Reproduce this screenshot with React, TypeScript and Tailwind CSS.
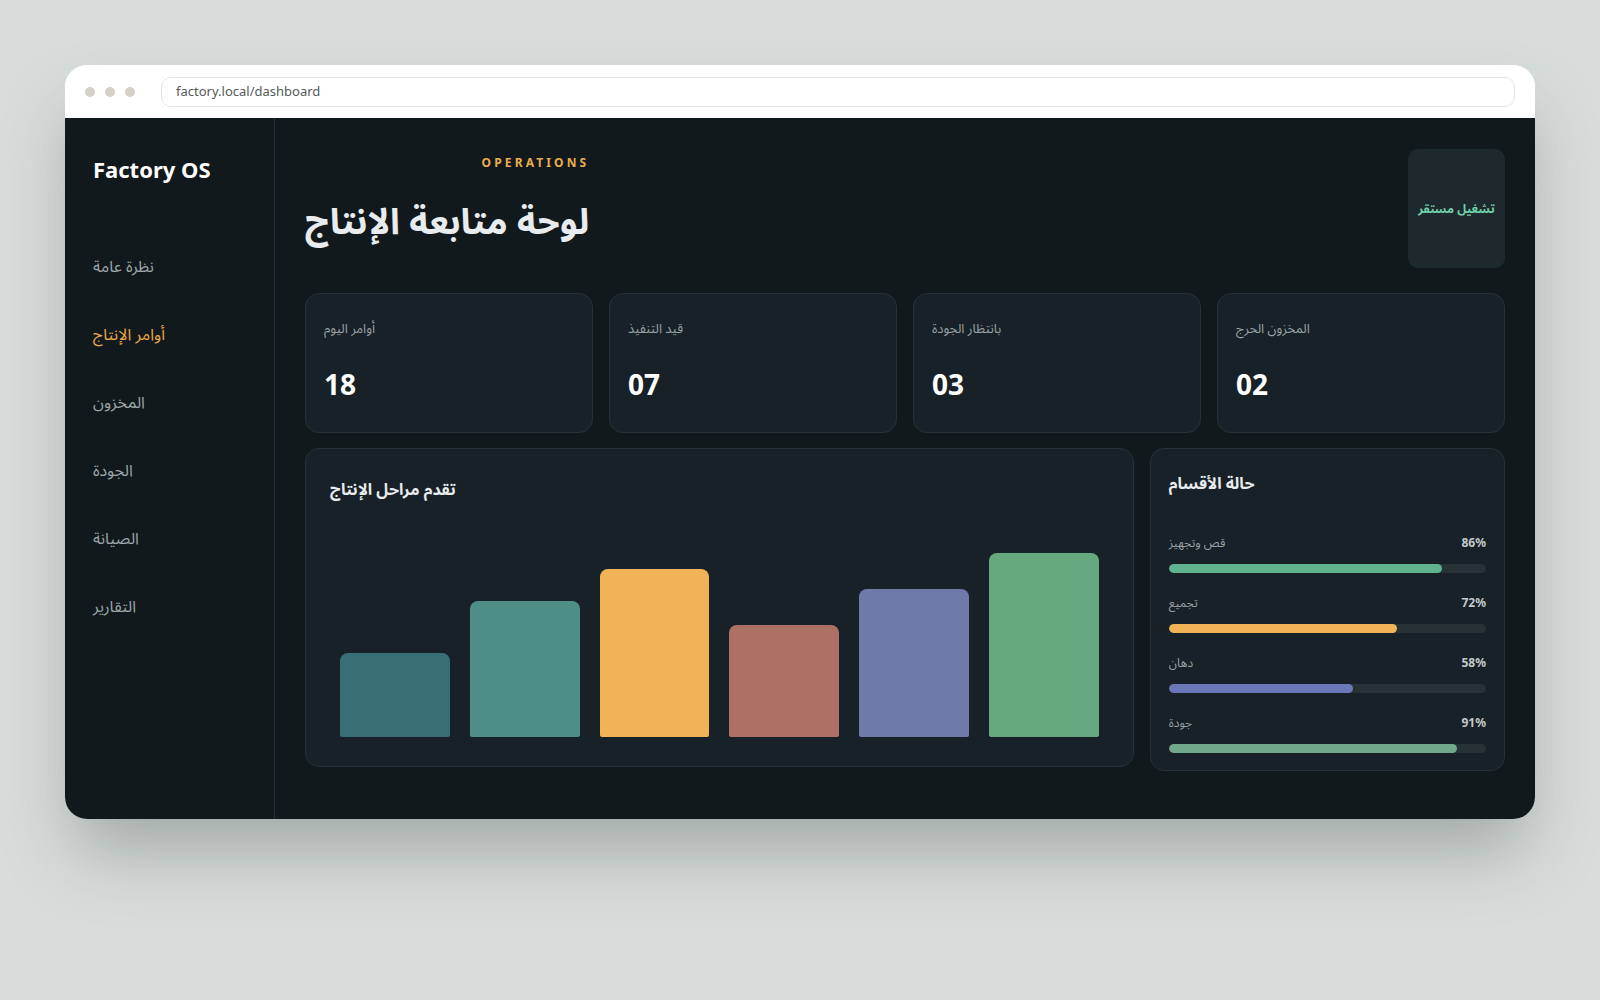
import React from "react";

const nav = [
  { label: "نظرة عامة", active: false },
  { label: "أوامر الإنتاج", active: true },
  { label: "المخزون", active: false },
  { label: "الجودة", active: false },
  { label: "الصيانة", active: false },
  { label: "التقارير", active: false },
];

const stats = [
  { label: "أوامر اليوم", value: "18" },
  { label: "قيد التنفيذ", value: "07" },
  { label: "بانتظار الجودة", value: "03" },
  { label: "المخزون الحرج", value: "02" },
];

const bars = [
  { h: 84, color: "#386f77" },
  { h: 136, color: "#4f8e86" },
  { h: 168, color: "#f0b457" },
  { h: 112, color: "#ad7065" },
  { h: 148, color: "#6f7aab" },
  { h: 184, color: "#66a880" },
];

const depts = [
  { label: "قص وتجهيز", pct: 86, color: "#5fb48e" },
  { label: "تجميع", pct: 72, color: "#f0b457" },
  { label: "دهان", pct: 58, color: "#6a78b8" },
  { label: "جودة", pct: 91, color: "#72a88a" },
];

export default function App() {
  return (
    <div
      className="min-h-screen w-full bg-[#d7dddb] px-[65px] pt-[65px] pb-[100px]"
      style={{ fontFamily: '"Noto Sans", "Noto Sans Arabic", "Noto Naskh Arabic", sans-serif' }}
    >
      <div className="rounded-[22px] overflow-hidden bg-white shadow-[0_40px_70px_-10px_rgba(60,70,65,0.35)]">
        {/* Browser chrome */}
        <div className="h-[53px] flex items-center px-[20px] bg-white">
          <div className="flex items-center gap-[10px]">
            <span className="w-[10px] h-[10px] rounded-full bg-[#d6d1c5]" />
            <span className="w-[10px] h-[10px] rounded-full bg-[#d6d1c5]" />
            <span className="w-[10px] h-[10px] rounded-full bg-[#d6d1c5]" />
          </div>
          <div className="ml-[26px] flex-1 h-[30px] rounded-[10px] border border-[#e4e4e2] flex items-center pl-[14px] text-[13px] text-[#555a5c]">
            factory.local/dashboard
          </div>
        </div>

        {/* App body */}
        <div className="h-[701px] flex bg-[#12191c]">
          <aside className="w-[210px] shrink-0 border-r border-[#263034] pt-[36px] px-[28px]">
            <div className="text-[22px] leading-[30px] font-bold text-white">Factory OS</div>
            <nav className="mt-[48px] flex flex-col">
              {nav.map((n) => (
                <div
                  key={n.label}
                  className={`h-[68px] flex items-center text-[16px] ${n.active ? "text-[#eaa94a]" : "text-[#9ca5a8]"}`}
                >
                  {n.label}
                </div>
              ))}
            </nav>
          </aside>

          <main className="flex-1 px-[30px] pt-[31px]">
            {/* Header */}
            <div className="flex justify-between items-stretch">
              <div className="flex flex-col items-end pt-[6px]">
                <span className="text-[12px] leading-[16px] font-bold tracking-[0.26em] text-[#e9ad4f]">OPERATIONS</span>
                <h1 className="mt-[24px] text-[36px] leading-[52px] font-bold text-[#e8ecee]">لوحة متابعة الإنتاج</h1>
              </div>
              <div className="w-[97px] h-[119px] rounded-[10px] bg-[#1d292c] flex items-center justify-center text-[12px] font-bold text-[#6fd0a8] whitespace-nowrap">
                تشغيل مستقر
              </div>
            </div>

            {/* Stats */}
            <div className="mt-[25px] grid grid-cols-4 gap-4">
              {stats.map((s) => (
                <div key={s.label} className="h-[140px] rounded-[14px] border border-[#263236] bg-[#182127] px-[18px] pt-[24px]">
                  <div className="text-[13px] leading-[20px] text-[#98a1a4]">{s.label}</div>
                  <div className="mt-[29px] text-[28px] leading-[34px] font-bold text-white">{s.value}</div>
                </div>
              ))}
            </div>

            {/* Bottom row */}
            <div className="mt-[15px] grid grid-cols-[7fr_3fr] gap-4 items-start">
              <div className="h-[319px] rounded-[14px] border border-[#263236] bg-[#182127] px-[24px] pt-[28px] pb-[29px] flex flex-col">
                <h2 className="text-[16px] leading-[24px] font-bold text-[#e8ecee]">تقدم مراحل الإنتاج</h2>
                <div className="flex-1 flex items-end gap-[20px] px-[10px]">
                  {bars.map((b, i) => (
                    <div
                      key={i}
                      className="flex-1 rounded-t-[8px] rounded-b-[2px]"
                      style={{ height: b.h, backgroundColor: b.color }}
                    />
                  ))}
                </div>
              </div>

              <div className="rounded-[14px] border border-[#263236] bg-[#182127] px-[18px] pt-[22px] pb-[17px]">
                <h2 className="text-[16px] leading-[24px] font-bold text-[#e8ecee]">حالة الأقسام</h2>
                <div className="mt-[39px] flex flex-col gap-[21px]">
                  {depts.map((d) => (
                    <div key={d.label}>
                      <div className="flex justify-between items-center text-[12px] leading-[18px]">
                        <span className="text-[#98a1a4]">{d.label}</span>
                        <span className="font-bold text-[#c3c9cb]">{d.pct}%</span>
                      </div>
                      <div className="mt-[12px] h-[9px] rounded-full bg-[#263236] overflow-hidden">
                        <div className="h-full rounded-full" style={{ width: `${d.pct}%`, backgroundColor: d.color }} />
                      </div>
                    </div>
                  ))}
                </div>
              </div>
            </div>
          </main>
        </div>
      </div>
    </div>
  );
}
